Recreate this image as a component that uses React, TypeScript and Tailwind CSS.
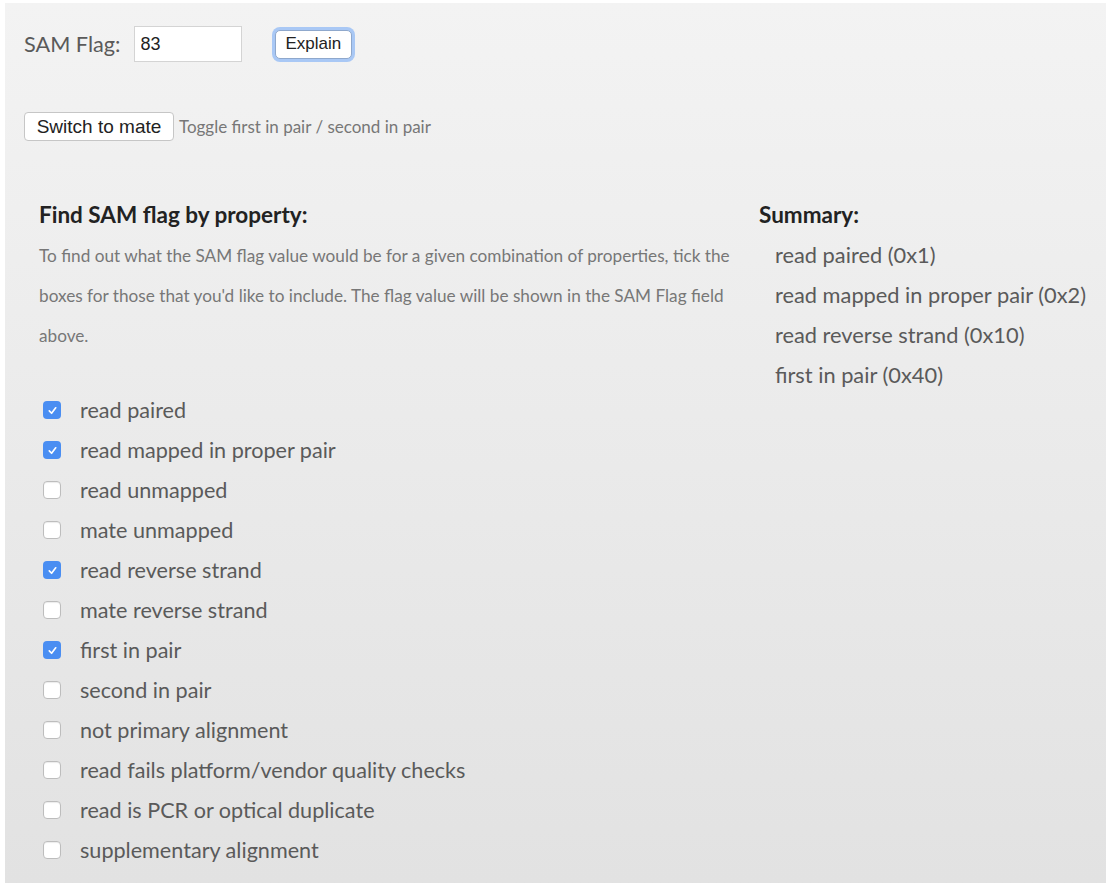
import { useState } from "react";

const FLAGS = [
  { bit: 0x1, label: "read paired" },
  { bit: 0x2, label: "read mapped in proper pair" },
  { bit: 0x4, label: "read unmapped" },
  { bit: 0x8, label: "mate unmapped" },
  { bit: 0x10, label: "read reverse strand" },
  { bit: 0x20, label: "mate reverse strand" },
  { bit: 0x40, label: "first in pair" },
  { bit: 0x80, label: "second in pair" },
  { bit: 0x100, label: "not primary alignment" },
  { bit: 0x200, label: "read fails platform/vendor quality checks" },
  { bit: 0x400, label: "read is PCR or optical duplicate" },
  { bit: 0x800, label: "supplementary alignment" },
];

const App = () => {
  const [flag, setFlag] = useState(83);

  const toggle = (bit: number) => setFlag((f) => f ^ bit);

  const switchMate = () => {
    if (flag & 0xc0) setFlag((f) => f ^ 0xc0);
  };

  return (
    <div className="bg-white h-[890px] pt-[3px] pl-[5px] pr-[10px] pb-[7px] font-['Lato',sans-serif]">
      <div className="h-full bg-gradient-to-b from-[#f3f3f3] to-[#e2e2e2]">
        <div className="flex items-center pl-[19px] pt-[23px]">
          <span className="text-[21.7px] text-[#5a5a5a]">SAM Flag:</span>
          <input
            value={flag}
            onChange={(e) => setFlag(Number(e.target.value) || 0)}
            className="ml-[13px] w-[108px] h-[36px] bg-white border border-[#d4d4d4] px-[6px] text-[18px] text-[#222] font-['Liberation_Sans',Arial,sans-serif] outline-none"
          />
          <button className="ml-[33px] h-[29px] px-[10px] bg-white border border-[#8fa8cc] rounded-[5px] ring-[3px] ring-[#a9c8f5] text-[17px] text-[#222] font-['Liberation_Sans',Arial,sans-serif]">
            Explain
          </button>
        </div>

        <div className="flex items-center pl-[19px] mt-[50px]">
          <button
            onClick={switchMate}
            className="h-[29px] w-[150px] bg-white border border-[#c6c6c6] rounded-[4px] text-[19px] text-[#222] font-['Liberation_Sans',Arial,sans-serif]"
          >
            Switch to mate
          </button>
          <span className="ml-[5px] text-[17px] text-[#777]">Toggle first in pair / second in pair</span>
        </div>

        <div className="flex pl-[34px] mt-[55px] gap-[20px]">
          <div className="w-[700px]">
            <h3 className="text-[22.5px] font-bold text-[#222] leading-[38px]">Find SAM flag by property:</h3>
            <p className="mt-[2px] text-[17.2px] text-[#777] leading-[40px]">
              To find out what the SAM flag value would be for a given combination of properties, tick the boxes
              for those that you'd like to include. The flag value will be shown in the SAM Flag field above.
            </p>
            <div className="mt-[34px] flex flex-col">
              {FLAGS.map((item) => {
                const checked = (flag & item.bit) !== 0;
                return (
                  <label key={item.bit} className="flex items-center h-[40px] cursor-pointer">
                    <span
                      className={
                        checked
                          ? "ml-[4px] w-[18px] h-[18px] rounded-[4px] bg-[#4a8ef2] flex items-center justify-center"
                          : "ml-[4px] w-[18px] h-[18px] rounded-[4px] bg-white border border-[#bdbdbd] shadow-[inset_0_1px_1px_rgba(0,0,0,0.08)]"
                      }
                    >
                      {checked && (
                        <svg viewBox="0 0 12 12" className="w-[11px] h-[11px]">
                          <path d="M2.5 6.5 L5 9 L9.5 3" fill="none" stroke="white" strokeWidth="1.8" strokeLinecap="round" strokeLinejoin="round" />
                        </svg>
                      )}
                    </span>
                    <input type="checkbox" className="hidden" checked={checked} onChange={() => toggle(item.bit)} />
                    <span className="ml-[19px] text-[21.6px] text-[#5a5a5a]">{item.label}</span>
                  </label>
                );
              })}
            </div>
          </div>

          <div>
            <h3 className="text-[22.5px] font-bold text-[#222] leading-[38px]">Summary:</h3>
            <div className="mt-[1px] pl-[16px] flex flex-col">
              {FLAGS.filter((item) => flag & item.bit).map((item) => (
                <div key={item.bit} className="h-[40px] flex items-center text-[21.8px] text-[#5a5a5a]">
                  {item.label} (0x{item.bit.toString(16)})
                </div>
              ))}
            </div>
          </div>
        </div>
      </div>
    </div>
  );
};

export default App;
